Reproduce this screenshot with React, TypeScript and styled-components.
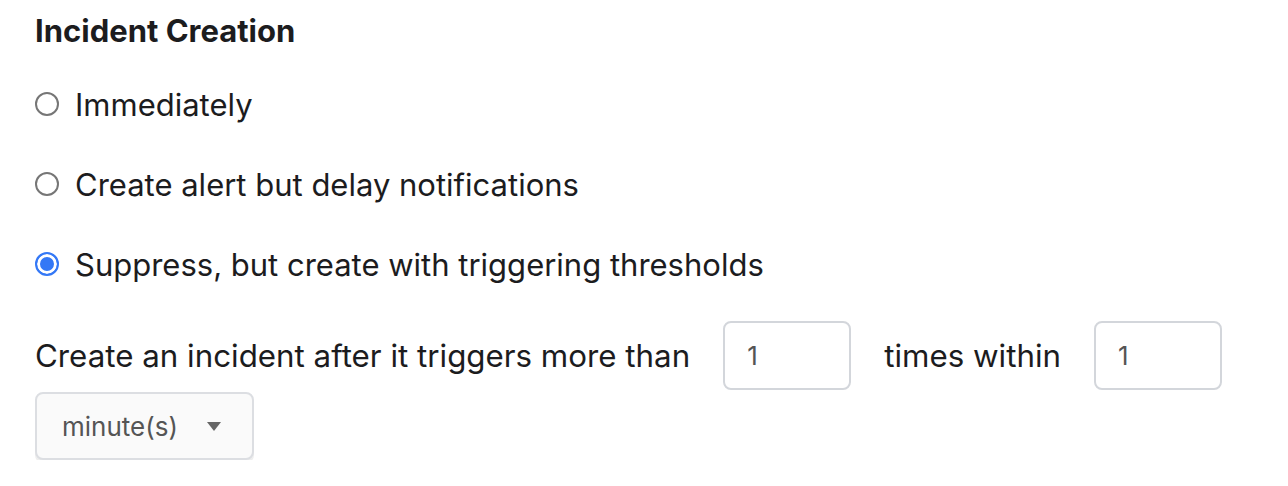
import { useState } from 'react';
import styled, { createGlobalStyle } from 'styled-components';

const GlobalStyle = createGlobalStyle`
    body {
        margin: 0;
        background: #ffffff;
        font-family: Inter, 'Noto Sans', 'Liberation Sans', sans-serif;
        color: #1c1c1e;
    }
`;

const Page = styled.div`
    display: flex;
    flex-direction: column;
    padding: 11px 40px 0 35px;
`;

const Title = styled.h2`
    margin: 0;
    font-size: 31px;
    line-height: 40px;
    font-weight: 700;
    color: #1c1c1e;
`;

const RadioGroup = styled.div`
    display: flex;
    flex-direction: column;
    gap: 40px;
    margin-top: 33px;
`;

const RadioRow = styled.label`
    display: flex;
    align-items: center;
    gap: 16px;
    height: 40px;
    font-size: 31px;
    cursor: pointer;
`;

const RadioCircle = styled.span<{ checked: boolean }>`
    box-sizing: border-box;
    width: 24px;
    height: 24px;
    border-radius: 50%;
    border: ${props => (props.checked ? '2px solid #3478f6' : '2px solid #767676')};
    background: ${props => (props.checked ? '#3478f6' : '#ffffff')};
    box-shadow: ${props => (props.checked ? 'inset 0 0 0 3px #ffffff' : 'none')};
    flex-shrink: 0;
`;

const ThresholdRow = styled.div`
    display: flex;
    flex-wrap: wrap;
    align-items: center;
    column-gap: 33px;
    row-gap: 2px;
    margin-top: 37px;
    font-size: 31.3px;
`;

const NumberBox = styled.input`
    box-sizing: border-box;
    width: 128px;
    height: 69px;
    padding: 0 22px;
    border: 2px solid #d3d6db;
    border-radius: 8px;
    font-family: inherit;
    font-size: 26px;
    color: #555555;
    background: #ffffff;
    outline: none;
`;

const Select = styled.div`
    box-sizing: border-box;
    display: flex;
    align-items: center;
    justify-content: space-between;
    width: 219px;
    height: 68px;
    padding: 0 31px 0 25px;
    border: 2px solid #dcdee2;
    border-radius: 8px;
    background: #fafafa;
    box-shadow: 0 3px 0 #eeeeee;
    font-size: 26px;
    color: #555555;
`;

const Caret = styled.span`
    width: 0;
    height: 0;
    border-left: 7px solid transparent;
    border-right: 7px solid transparent;
    border-top: 9px solid #666666;
`;

const options = ['Immediately', 'Create alert but delay notifications', 'Suppress, but create with triggering thresholds'];

const App = () => {
    const [selected, setSelected] = useState(2);
    const [count, setCount] = useState('1');
    const [within, setWithin] = useState('1');
    return (
        <Page>
            <GlobalStyle />
            <Title>Incident Creation</Title>
            <RadioGroup>
                {options.map((option, i) => (
                    <RadioRow key={option} onClick={() => setSelected(i)}>
                        <RadioCircle checked={selected === i} />
                        {option}
                    </RadioRow>
                ))}
            </RadioGroup>
            <ThresholdRow>
                <span>Create an incident after it triggers more than</span>
                <NumberBox value={count} onChange={e => setCount(e.target.value)} />
                <span>times within</span>
                <NumberBox value={within} onChange={e => setWithin(e.target.value)} />
                <Select>
                    minute(s)
                    <Caret />
                </Select>
            </ThresholdRow>
        </Page>
    );
};

export default App;
